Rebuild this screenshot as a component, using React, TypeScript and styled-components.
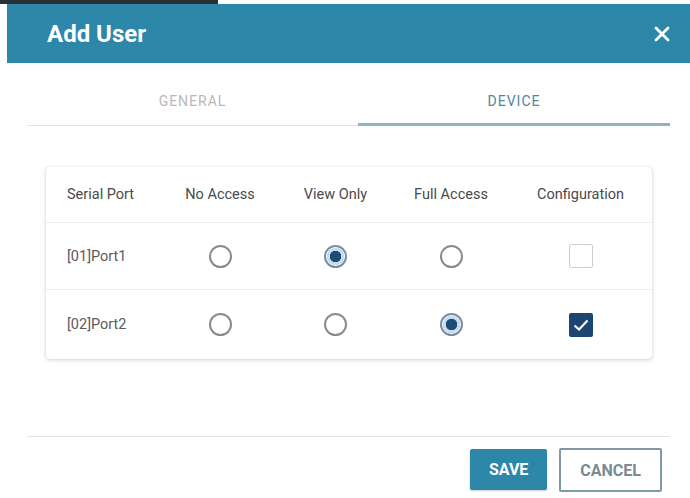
import styled, { createGlobalStyle } from "styled-components";

type Access = "none" | "view" | "full";

interface PortRow {
  name: string;
  access: Access;
  configuration: boolean;
}

const ports: PortRow[] = [
  { name: "[01]Port1", access: "view", configuration: false },
  { name: "[02]Port2", access: "full", configuration: true },
];

const columns = ["Serial Port", "No Access", "View Only", "Full Access", "Configuration"];
const levels: Access[] = ["none", "view", "full"];

const GlobalStyle = createGlobalStyle`
  html, body {
    margin: 0;
    padding: 0;
    background: #ffffff;
    font-family: Roboto, "Liberation Sans", sans-serif;
  }
`;

export default function App() {
  return (
    <>
      <GlobalStyle />
      <StyledTopEdge />
      <StyledDialog>
        <StyledHeader>
          <StyledTitle>Add User</StyledTitle>
          <StyledClose aria-label="close">
            <svg width="16" height="16" viewBox="0 0 16 16">
              <path
                d="M2 2 L14 14 M14 2 L2 14"
                stroke="#ffffff"
                strokeWidth="2.8"
                strokeLinecap="round"
              />
            </svg>
          </StyledClose>
        </StyledHeader>

        <StyledBody>
          <StyledTabs>
            <StyledTab>GENERAL</StyledTab>
            <StyledTab $active>DEVICE</StyledTab>
          </StyledTabs>

          <StyledCard>
            <StyledRow $head>
              {columns.map((label, i) => (
                <StyledHeadCell key={label} $left={i === 0}>
                  {label}
                </StyledHeadCell>
              ))}
            </StyledRow>
            {ports.map((port, index) => (
              <StyledRow key={port.name} $last={index === ports.length - 1}>
                <StyledPortName>{port.name}</StyledPortName>
                {levels.map((level) => (
                  <StyledCell key={level}>
                    <StyledRadio $checked={port.access === level} />
                  </StyledCell>
                ))}
                <StyledCell>
                  <StyledCheckbox $checked={port.configuration}>
                    {port.configuration && (
                      <svg width="20" height="20" viewBox="0 0 20 20">
                        <path
                          d="M3.5 10.5 L8 14.5 L16.5 5.5"
                          fill="none"
                          stroke="#ffffff"
                          strokeWidth="2.2"
                        />
                      </svg>
                    )}
                  </StyledCheckbox>
                </StyledCell>
              </StyledRow>
            ))}
          </StyledCard>
        </StyledBody>

        <StyledFooter>
          <StyledButton $primary>SAVE</StyledButton>
          <StyledButton>CANCEL</StyledButton>
        </StyledFooter>
      </StyledDialog>
    </>
  );
}

const StyledTopEdge = styled.div`
  width: 218px;
  height: 4px;
  background: #263238;
`;

const StyledDialog = styled.div`
  margin-left: 7px;
  width: 683px;
  display: flex;
  flex-direction: column;
`;

const StyledHeader = styled.div`
  height: 59px;
  background: #2c87a9;
  display: flex;
  align-items: center;
  justify-content: space-between;
  padding: 0 20px 0 40px;
`;

const StyledTitle = styled.h1`
  margin: 0;
  color: #ffffff;
  font-size: 24px;
  font-weight: 700;
`;

const StyledClose = styled.span`
  display: flex;
  width: 16px;
  height: 16px;
`;

const StyledBody = styled.div`
  padding: 14px 20px 0;
  height: 359px;
`;

const StyledTabs = styled.div`
  display: grid;
  grid-template-columns: 331px 1fr;
  border-bottom: 1px solid #e2e2e2;
`;

const StyledTab = styled.div<{ $active?: boolean }>`
  height: 48px;
  display: flex;
  align-items: center;
  justify-content: center;
  font-size: 14px;
  letter-spacing: 1px;
  color: ${({ $active }) => ($active ? "#4f86a0" : "#b9b9b9")};
  box-shadow: ${({ $active }) => ($active ? "inset 0 -2px 0 #8eb4c3" : "none")};
  margin-bottom: -1px;
  border-bottom: 1px solid ${({ $active }) => ($active ? "#8eb4c3" : "transparent")};
`;

const StyledCard = styled.div`
  margin: 41px 18px 0 19px;
  border-radius: 4px;
  background: #ffffff;
  box-shadow: 0 1px 4px rgba(0, 0, 0, 0.18), 0 0 1px rgba(0, 0, 0, 0.12);
`;

const StyledRow = styled.div<{ $head?: boolean; $last?: boolean }>`
  display: grid;
  grid-template-columns: 116px 116px 115px 116px 1fr;
  align-items: center;
  height: ${({ $head, $last }) => ($head ? 55 : $last ? 69 : 66)}px;
  border-bottom: ${({ $last }) => ($last ? "none" : "1px solid #ececec")};
`;

const StyledHeadCell = styled.div<{ $left?: boolean }>`
  font-size: 14.5px;
  color: #4a4a4a;
  white-space: nowrap;
  text-align: ${({ $left }) => ($left ? "left" : "center")};
  padding-left: ${({ $left }) => ($left ? "21px" : "0")};
`;

const StyledPortName = styled.div`
  font-size: 14.5px;
  color: #5a5a5a;
  padding-left: 21px;
`;

const StyledCell = styled.div`
  display: flex;
  justify-content: center;
`;

const StyledRadio = styled.span<{ $checked?: boolean }>`
  box-sizing: border-box;
  width: 23px;
  height: 23px;
  border-radius: 50%;
  border: 2px solid ${({ $checked }) => ($checked ? "#7d8c99" : "#8a8a8a")};
  background: ${({ $checked }) =>
    $checked
      ? "radial-gradient(circle, #1f4b78 0 5.5px, #c6dcef 6px 8.5px, #ffffff 9px)"
      : "#ffffff"};
`;

const StyledCheckbox = styled.span<{ $checked?: boolean }>`
  box-sizing: border-box;
  width: 24px;
  height: 24px;
  border-radius: 2px;
  display: flex;
  align-items: center;
  justify-content: center;
  background: ${({ $checked }) => ($checked ? "#1d4572" : "#ffffff")};
  border: ${({ $checked }) => ($checked ? "none" : "1.5px solid #cfcfcf")};
`;

const StyledFooter = styled.div`
  margin: 0 20px;
  border-top: 1px solid #e3e3e3;
  padding: 11px 8px 0 0;
  display: flex;
  justify-content: flex-end;
  gap: 12px;
`;

const StyledButton = styled.button<{ $primary?: boolean }>`
  height: ${({ $primary }) => ($primary ? 41 : 44)}px;
  margin-top: ${({ $primary }) => ($primary ? 1 : 0)}px;
  padding: 0 19px;
  font-family: Roboto, "Liberation Sans", sans-serif;
  font-size: 16px;
  font-weight: 700;
  border-radius: 2px;
  color: ${({ $primary }) => ($primary ? "#ffffff" : "#7a8a92")};
  background: ${({ $primary }) => ($primary ? "#2c87a9" : "#ffffff")};
  border: ${({ $primary }) => ($primary ? "none" : "2px solid #7e9aa6")};
  box-shadow: ${({ $primary }) => ($primary ? "0 1px 2px rgba(0,0,0,0.2)" : "none")};
`;
